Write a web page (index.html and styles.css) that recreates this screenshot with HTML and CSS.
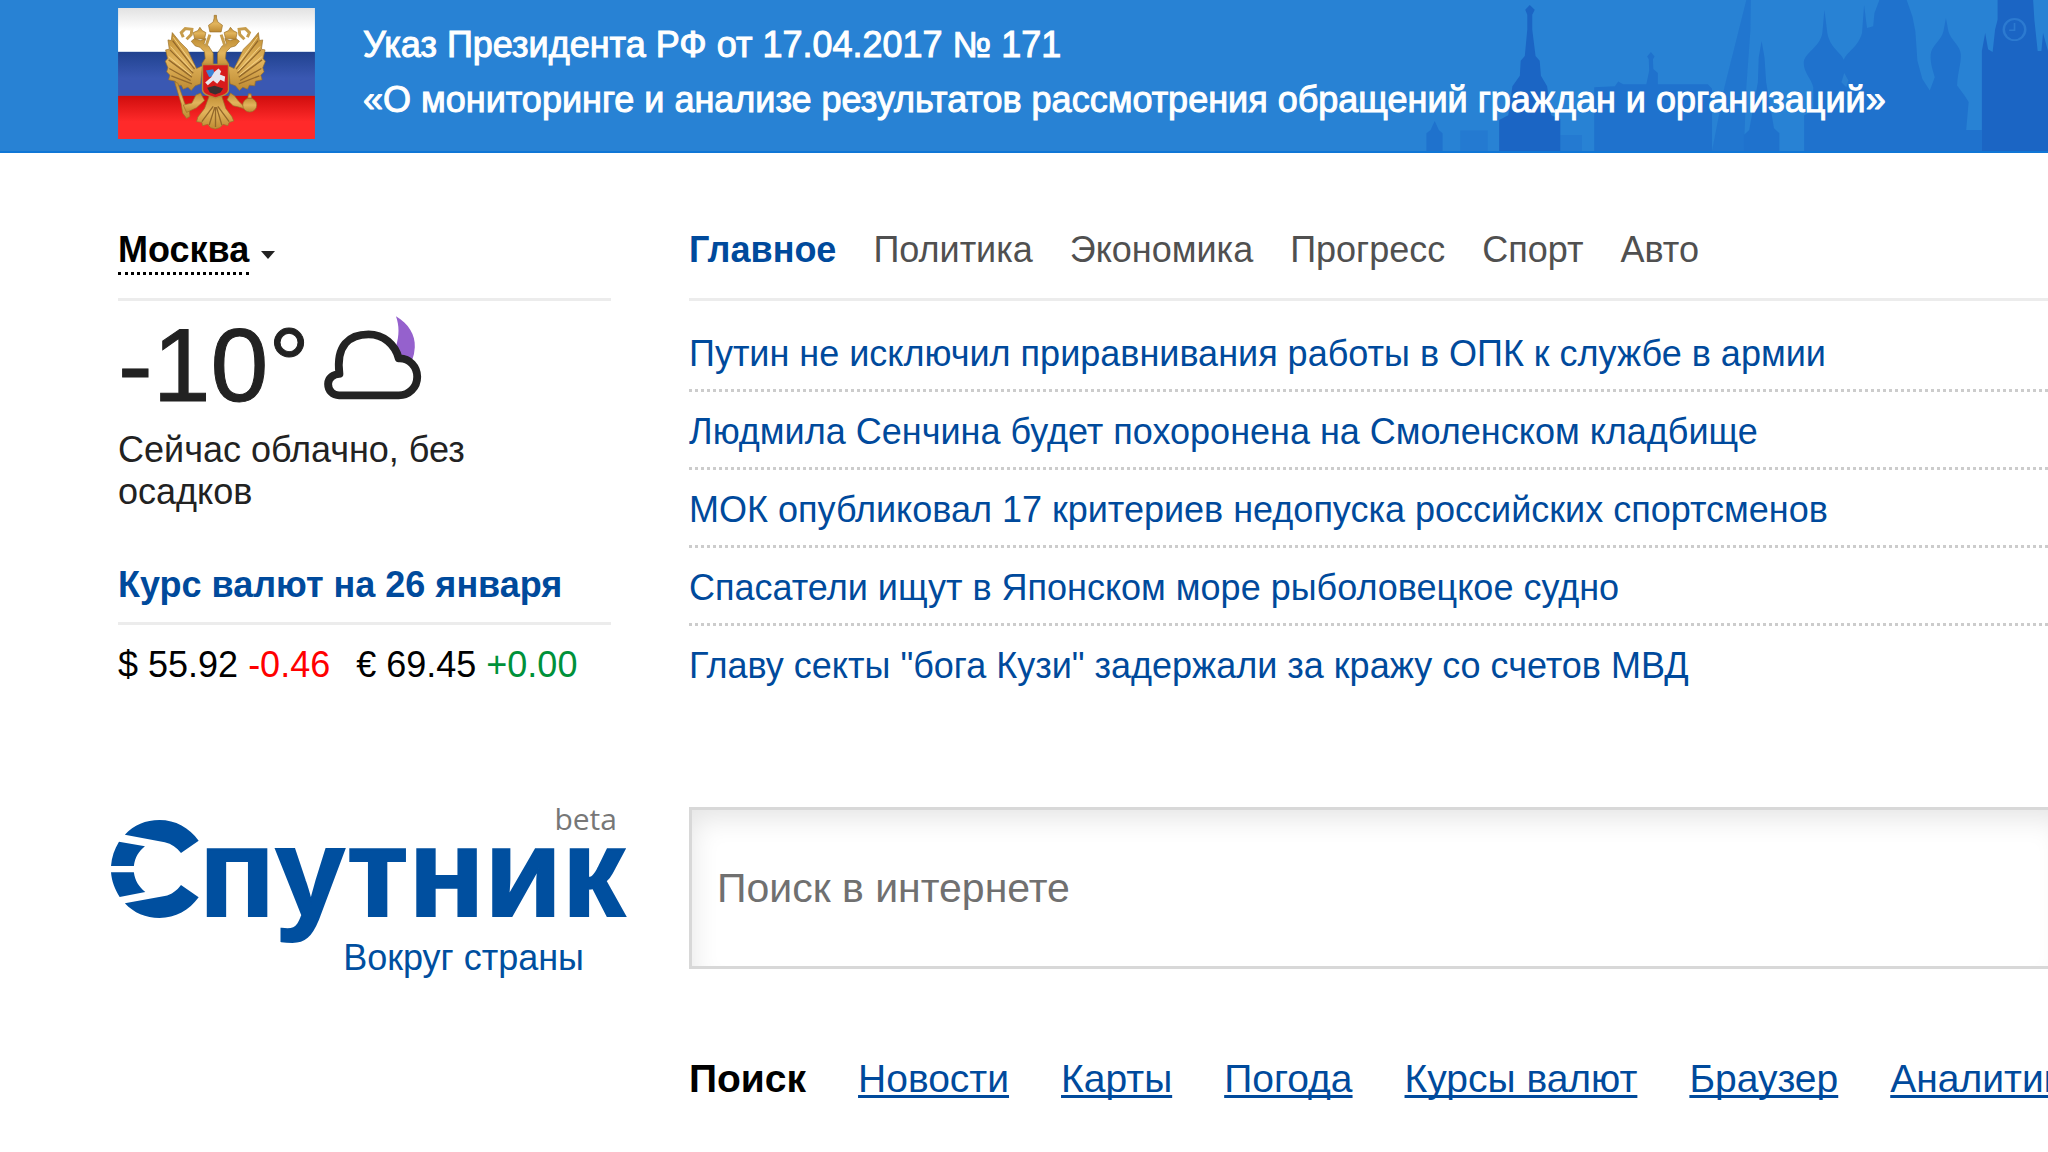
FILE: index.html
```html
<!DOCTYPE html>
<html lang="ru">
<head>
	<meta charset="UTF-8">
	<title>Спутник</title>
	<link rel="stylesheet" href="styles.css">
</head>
<body>
<a class="banner" href="#">
<svg class="skyline" viewBox="0 0 1568 459" preserveAspectRatio="none" aria-hidden="true">
<g fill="#1f72cd">
<path d="M64 459V405L74 395L84 368L94 395L103 405V459Z"/>
<path opacity=".5" d="M146 459V397H212V459ZM388 459V410H440V459Z"/>
<path d="M470 459V265L520 262L528 248L540 256H596L603 215L602 180L598 172L607 158L616 172L612 180L613 210L624 222V256H745L755 270V459Z"/>
<path opacity=".75" d="M755 459L785 265L838 0H849L848 90L838 265L832 459Z"/>
<path d="M832 459V410L845 395L866 250L868 175L875 125L882 175L886 250L905 390L918 405V459Z"/>
<path d="M978 459V350L1000 335V265C996 240 977 220 977 192C977 160 1016 145 1022 100L1027 30L1034 100C1040 145 1068 160 1074 182C1082 155 1108 145 1118 100L1123 15L1130 85L1145 80L1148 40L1160 0H1226L1240 50L1247 95L1252 185L1264 240L1282 275L1294 235C1290 215 1283 195 1284 165C1286 140 1311 120 1315 95L1321 55L1327 95C1332 120 1356 140 1357 165C1358 195 1350 215 1348 260L1366 290L1376 310L1370 395H1408V459Z"/>
</g>
<g fill="#1b65c4">
<path d="M240 459V365L262 350L272 262L290 230L292 185L302 170L308 90V45L303 30L314 15L326 30L320 45V90L328 170L338 185L341 230L356 262L366 350L388 362V459Z"/>
<path d="M1408 459V155L1416 100L1423 150L1434 158L1440 90L1446 60V0H1532L1535 60L1543 155H1552L1556 100L1568 155V459Z"/>
<ellipse cx="1487" cy="90" rx="26" ry="32" fill="none" stroke="#2c7ad0" stroke-width="6"/>
<path d="M1487 70V92H1474" fill="none" stroke="#2c7ad0" stroke-width="4"/>
</g>
<path fill="#2a80d2" d="M1068 250L1075 222L1085 245L1080 265Z"/>
</svg>
<svg class="flag" viewBox="54 24 592 394" role="img" aria-label="Флаг России">
<defs>
<linearGradient id="fw" x1="0" y1="0" x2="0" y2="1"><stop offset="0" stop-color="#e2e2e2"/><stop offset=".5" stop-color="#fff"/></linearGradient>
<linearGradient id="fb" x1="0" y1="0" x2="0" y2="1"><stop offset="0" stop-color="#20428f"/><stop offset=".6" stop-color="#3a58b2"/></linearGradient>
<linearGradient id="fr" x1="0" y1="0" x2="0" y2="1"><stop offset="0" stop-color="#cf0d0d"/><stop offset=".6" stop-color="#ff2a2a"/></linearGradient>
<linearGradient id="gold" x1="0" y1="0" x2="0" y2="1"><stop offset="0" stop-color="#c08f35"/><stop offset=".5" stop-color="#e2b45c"/><stop offset="1" stop-color="#bd8a32"/></linearGradient>
</defs>
<rect x="54" y="24" width="592" height="132" fill="url(#fw)"/>
<rect x="54" y="156" width="592" height="132" fill="url(#fb)"/>
<rect x="54" y="288" width="592" height="130" fill="url(#fr)"/>
<g fill="url(#gold)" stroke="#9a7028" stroke-width="2">
<!-- wings -->
<g id="wing">
<path d="M308 198L290 206L276 178L262 148L240 126L217 98L214 122L204 120L208 148L197 150L203 176L196 184L204 204L200 216L210 226L206 240L226 244L228 258L244 256L250 268L264 262L274 272L286 258L302 252Z"/>
<path fill="none" stroke="#93682a" stroke-width="4" d="M218 122L284 208M210 150L280 220M206 180L276 232M208 206L272 242M214 228L276 252"/>
<path fill="none" stroke="#f1d087" stroke-width="3" d="M220 112L284 200M212 140L278 214M206 170L274 226"/>
</g>
<use href="#wing" transform="matrix(-1 0 0 1 693 0)"/>
<!-- heads and necks -->
<path id="neck" d="M340 204V160L326 138L312 132L318 116L302 122L284 116L274 124L286 138L300 142L314 156L316 176L306 192Z"/>
<use href="#neck" transform="matrix(-1 0 0 1 693 0)"/>
<path d="M284 116L280 98L294 92L300 82L307 92L318 98L314 118ZM377 116L373 98L386 92L392 82L400 92L412 98L408 118Z"/>
<path d="M330 96L326 76L340 66L343 54V46H350V54L354 66L368 76L364 96Z"/>
<path fill="none" stroke="#c79c4a" stroke-width="9" d="M330 104L318 140M364 104L376 140M250 112L244 98L256 86L276 88L274 104L260 118M443 112L449 98L437 86L418 88L420 104L434 118"/>
<!-- sceptre and orb -->
<path d="M224 246L234 250L254 310L268 332L270 350L260 356L248 340L244 312Z"/>
<path d="M250 316L276 310L288 286L302 280L314 302L290 324L260 338ZM443 330L417 322L400 318L382 300L392 280L404 288L416 304Z"/>
<circle cx="450" cy="316" r="21"/>
<path d="M444 296L446 282H454L456 296Z"/>
<!-- tail -->
<path d="M330 284L314 326L294 352L290 366L306 368L308 378L324 374L332 384L346 388L360 384L370 374L384 378L388 368L402 364L396 350L378 326L364 284Z"/>
<path fill="none" stroke="#93682a" stroke-width="4" d="M340 320L306 366M345 322L328 376M347 322V382M350 322L366 376M354 320L388 366"/>
</g>
<path d="M308 194H386V270C386 284 366 288 347 294C328 288 308 284 308 270Z" fill="#d71c1c" stroke="#b58c3c" stroke-width="4"/>
<path d="M318 212L340 208L346 226L328 232Z" fill="#3b83d6"/>
<path d="M344 216L356 206L364 214L360 224L376 230L374 246L362 240L352 252L340 242L324 256L316 248L334 232Z" fill="#e6e6ee"/>
<path d="M322 264L344 258L370 266L362 278L346 284L330 278Z" fill="#3a3030"/>
</svg>
<div class="decree">
<p>Указ Президента РФ от 17.04.2017 № 171</p>
<p>«О мониторинге и анализе результатов рассмотрения обращений граждан и организаций»</p>
</div>
</a>
<main class="main">
<aside class="side">
<div class="head">
<button class="city" type="button"><span>Москва</span></button>
</div>
<div class="weather">
<span class="temp">-10°</span>
<svg class="cloud" viewBox="638 316 286 252" preserveAspectRatio="none" role="img" aria-label="Облачно">
<path d="M848 317C885 340 905 372 903 410Q902 430 896 446L858 440L848 408C858 375 858 345 848 317Z" fill="#9561cd"/>
<path d="M683 490C672 404 712 371 768 371C812 371 846 402 856 443C888 441 910 470 910 498C910 530 886 554 856 554H682C664 554 650 540 650 520C650 502 666 490 683 490Z" fill="#fff" stroke="#232323" stroke-width="23" stroke-linejoin="round"/>
</svg>
</div>
<p class="desc">Сейчас облачно, без осадков</p>
<h2 class="rates-title"><a href="#">Курс валют на 26 января</a></h2>
<p class="rates">
<span>$ 55.92 <b class="down">-0.46</b></span>
<span>€ 69.45 <b class="up">+0.00</b></span>
</p>
</aside>
<section class="news">
<nav class="head tabs">
<a class="active" href="#">Главное</a>
<a href="#">Политика</a>
<a href="#">Экономика</a>
<a href="#">Прогресс</a>
<a href="#">Спорт</a>
<a href="#">Авто</a>
</nav>
<ul class="list">
<li><a href="#">Путин не исключил приравнивания работы в ОПК к службе в армии</a></li>
<li><a href="#">Людмила Сенчина будет похоронена на Смоленском кладбище</a></li>
<li><a href="#">МОК опубликовал 17 критериев недопуска российских спортсменов</a></li>
<li><a href="#">Спасатели ищут в Японском море рыболовецкое судно</a></li>
<li><a href="#">Главу секты "бога Кузи" задержали за кражу со счетов МВД</a></li>
</ul>
</section>
<div class="brand">
<span class="beta">beta</span>
<a class="logo" href="#" aria-label="Спутник">
<svg class="orbit" viewBox="32 119 254 294" preserveAspectRatio="none" aria-hidden="true">
<g fill="#004f9f">
<path d="M72 163C98 134 132 119 172 119C218 119 258 142 285 181L234 218C222 202 207 191 187 186Z"/>
<path d="M55 184L130 198C112 213 101 232 98 257H32C34 230 42 206 55 184Z"/>
<path d="M32 276H98C101 300 112 320 131 335L57 350C43 327 34 303 32 276Z"/>
<path d="M72 369L187 347C207 343 222 331 234 314L285 351C258 390 218 413 172 413C132 413 98 398 72 369Z"/>
</g>
</svg>
<span class="word">путник</span>
</a>
<span class="slogan">Вокруг страны</span>
</div>
<form class="search">
<input type="text" placeholder="Поиск в интернете" aria-label="Поиск в интернете">
</form>
<nav class="services">
<b>Поиск</b>
<a href="#">Новости</a>
<a href="#">Карты</a>
<a href="#">Погода</a>
<a href="#">Курсы валют</a>
<a href="#">Браузер</a>
<a href="#">Аналитика</a>
</nav>
</main>
</body>
</html>
```
FILE: styles.css
```css
*{
	padding: 0;
	margin: 0;
	list-style: none;
	box-sizing: border-box;
}
body{
	font-family: "Liberation Sans", Arial, sans-serif;
	font-size: 36px;
	line-height: 42px;
	color: #222;
	background-color: #fff;
	overflow-x: hidden;
}
a{
	color: #004a9c;
	text-decoration: none;
}
.banner{
	display: flex;
	position: relative;
	height: 153px;
	padding: 8px 0 0 118px;
	gap: 48px;
	color: #fff;
	background-color: #2882d4;
	border-bottom: 2px solid #0f76d6;
	overflow: hidden;
}
.skyline{
	position: absolute;
	right: 0;
	top: 0;
	width: 648px;
	height: 151px;
}
.flag{
	width: 197px;
	height: 131px;
	flex: none;
}
.decree{
	position: relative;
	padding-top: 9px;
	line-height: 55px;
	white-space: nowrap;
	-webkit-text-stroke: 1px #fff;
}
.main{
	display: grid;
	grid-template-columns: 493px minmax(0, 1fr);
	column-gap: 78px;
	padding: 76px 0 0 118px;
}
.head{
	display: flex;
	height: 72px;
	border-bottom: 3px solid #ececec;
}
.city{
	display: flex;
	gap: 12px;
	align-items: center;
	height: 46px;
	font: inherit;
	font-weight: bold;
	color: #000;
	background: none;
	border: 0;
}
.city span{
	height: 46px;
	border-bottom: 3px dotted #000;
}
.city::after{
	content: "";
	margin-top: 6px;
	border: 7px solid transparent;
	border-top: 8px solid #222;
	border-bottom: 0;
}
.weather{
	display: flex;
	gap: 14px;
	height: 128px;
}
.temp{
	font-size: 104px;
	line-height: 128px;
	-webkit-text-stroke: 1px #222;
}
.cloud{
	width: 98px;
	height: 84px;
	margin-top: 15px;
}
.desc{
	width: 400px;
}
.rates-title{
	margin-top: 51px;
	padding-bottom: 16px;
	font-size: 36px;
	border-bottom: 3px solid #ececec;
}
.rates{
	display: flex;
	gap: 26px;
	padding-top: 19px;
	color: #000;
	white-space: nowrap;
}
.rates b{
	font-weight: normal;
}
.down{
	color: #f00;
}
.up{
	color: #00913a;
}
.tabs{
	gap: 37px;
}
.tabs a{
	color: #505050;
}
.tabs .active{
	color: #004a9c;
	font-weight: bold;
}
.list{
	padding-top: 13px;
}
.list li{
	height: 78px;
	padding-top: 19px;
	border-bottom: 3px dotted #ccc;
	white-space: nowrap;
}
.list li:last-child{
	border-bottom: 0;
}
.brand{
	display: flex;
	flex-direction: column;
	margin: 101px -20px 0 -7px;
}
.beta{
	align-self: flex-end;
	margin-right: 14px;
	font-family: "Open Sans", sans-serif;
	font-size: 30px;
	line-height: 28px;
	color: #777;
}
.logo{
	display: flex;
	height: 104px;
	color: #004f9f;
}
.orbit{
	width: 88px;
	height: 98px;
	margin-top: -13px;
	flex: none;
}
.word{
	font-size: 126px;
	line-height: 80px;
	font-weight: bold;
	-webkit-text-stroke: 2px #004f9f;
}
.slogan{
	align-self: flex-end;
	margin-right: 47px;
	color: #004f9f;
}
.search{
	margin-top: 103px;
}
.search input{
	display: block;
	width: 100%;
	height: 162px;
	padding-left: 25px;
	font: inherit;
	font-size: 41px;
	color: #222;
	background-color: #fff;
	border: 3px solid #d8d8d8;
	border-right: 0;
	box-shadow: inset 8px 16px 28px -8px #e4e4e4;
	outline: 0;
}
.search input::placeholder{
	color: #707070;
	opacity: 1;
}
.services{
	grid-column: 2;
	display: flex;
	gap: 52px;
	margin-top: 79px;
	font-size: 39px;
	white-space: nowrap;
	overflow: hidden;
}
.services b{
	color: #000;
}
.services a{
	text-decoration: underline;
	text-decoration-thickness: 3px;
	text-underline-offset: 3px;
	text-decoration-skip-ink: none;
}
```
